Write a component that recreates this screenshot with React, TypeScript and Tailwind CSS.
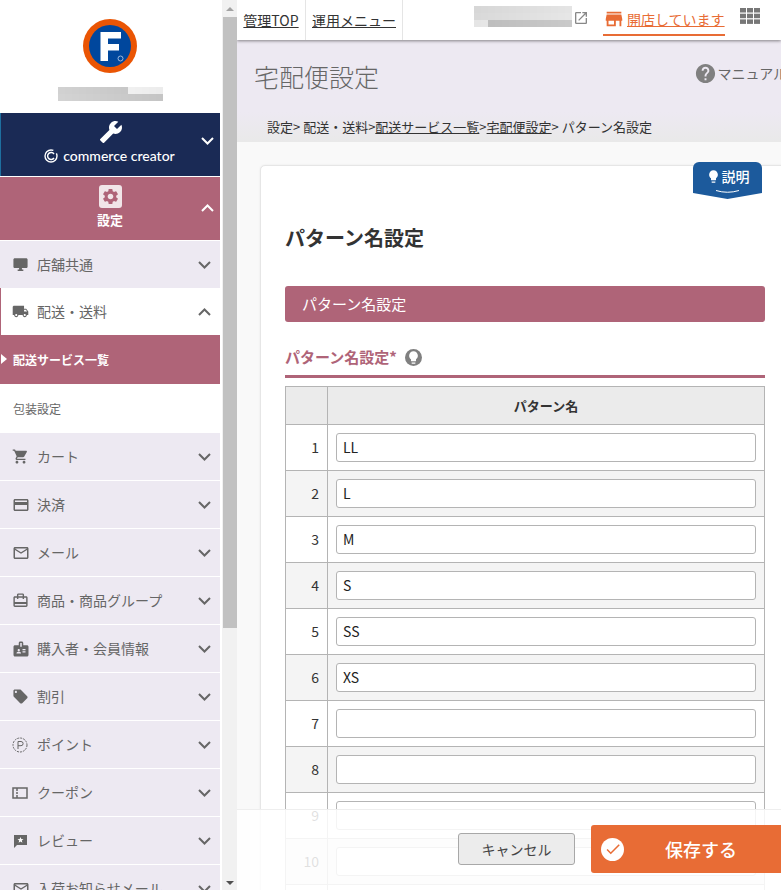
import React from "react";
import { MdBuild, MdSettings, MdLocalShipping, MdShoppingCart, MdCreditCard, MdMailOutline, MdLocalOffer, MdStore, MdHelp, MdLightbulb, MdOpenInNew, MdCheck, MdBadge, MdStar, MdDesktopWindows, MdCardTravel } from "react-icons/md";

const font = { fontFamily: '"Noto Sans CJK JP", "Noto Sans", sans-serif' };

function Chevron({ up = false, color = "#666", w = 2 }: { up?: boolean; color?: string; w?: number }) {
  return (
    <svg width="13" height="8" viewBox="0 0 13 8" fill="none" stroke={color} strokeWidth={w}>
      <path d={up ? "M1 7L6.5 1.5L12 7" : "M1 1L6.5 6.5L12 1"} />
    </svg>
  );
}

function Blur({ cols, rows, cell, seed }: { cols: number; rows: number; cell: number; seed: number }) {
  const rects = [];
  for (let r = 0; r < rows; r++) {
    for (let c = 0; c < cols; c++) {
      const v = (c * 37 + r * 53 + seed * (c + 3)) % 41;
      const g = 190 + v + (r === 0 ? 10 : 0);
      rects.push(<rect key={`${r}-${c}`} x={c * cell} y={r * cell} width={cell} height={cell} fill={`rgb(${g},${g},${g})`} />);
    }
  }
  return (
    <svg width={cols * cell} height={rows * cell} shapeRendering="crispEdges">
      {rects}
    </svg>
  );
}

function Logo() {
  return (
    <svg width="54" height="54" viewBox="0 0 54 54">
      <circle cx="27" cy="27" r="27" fill="#ea5504" />
      <circle cx="27" cy="27" r="21" fill="#00479d" />
      <path d="M17.5 13H38V19.5H25V25H36V31.5H25V42H17.5Z" fill="#fff" />
      <circle cx="37.5" cy="39.5" r="2.5" fill="none" stroke="#9db8dc" strokeWidth="1" />
    </svg>
  );
}

function PointIcon() {
  return (
    <svg width="16" height="16" viewBox="0 0 16 16" fill="none" stroke="#666">
      <circle cx="8" cy="8" r="7" strokeDasharray="2 1" />
      <path d="M6 12V4.5H9A2 2 0 0 1 9 8.7H6" />
    </svg>
  );
}

function CouponIcon() {
  return (
    <svg width="16" height="16" viewBox="0 0 16 16" fill="none" stroke="#666" strokeWidth="1.5">
      <path d="M1 3H15V13H1ZM5 3V6M5 7V9M5 10V13" />
    </svg>
  );
}

function ReviewIcon() {
  return (
    <svg width="16" height="16" viewBox="0 0 16 16">
      <path d="M2 2H15V12H5L2 15Z" fill="#666" />
      <path d="M8.5 4L9.3 6.1L11.5 6.2L9.8 7.6L10.4 9.7L8.5 8.5L6.6 9.7L7.2 7.6L5.5 6.2L7.7 6.1Z" fill="#fff" />
    </svg>
  );
}

function GoodsIcon() {
  return <MdCardTravel size={17} color="#666" />;
}

function MenuRow({ icon, label }: { icon: React.ReactNode; label: string }) {
  return (
    <div className="flex h-[48px] shrink-0 items-center border-b border-white bg-[#ede9f2] pl-[12px] pr-[9px] text-[14px] text-[#666]">
      <span className="flex w-[25px] shrink-0 items-center">{icon}</span>
      <span className="flex-1 whitespace-nowrap">{label}</span>
      <Chevron />
    </div>
  );
}

function Sidebar() {
  const gray = "#666";
  return (
    <aside className="flex h-[890px] w-[220px] shrink-0 flex-col overflow-hidden bg-white">
      <div className="flex h-[113px] shrink-0 flex-col items-center pt-[19px]">
        <Logo />
        <div className="mt-[14px]">
          <Blur cols={15} rows={2} cell={7} seed={3} />
        </div>
      </div>
      <div className="relative flex h-[63px] shrink-0 flex-col items-center border-l border-[#1e6f9f] bg-[#1a2a55] pt-[7px] text-white">
        <MdBuild size={24} className="-scale-x-100" />
        <div className="mt-[3px] flex items-center gap-[5px] pr-[2px] text-[14px] font-medium leading-[18px]" style={{ fontFamily: '"Lato", sans-serif' }}>
          <svg width="14" height="14" viewBox="0 0 14 14" fill="none" stroke="#fff" strokeWidth="1.4">
            <circle cx="7" cy="7" r="6" strokeDasharray="30 4" />
            <path d="M10 5A3.5 3.5 0 1 0 10 9" />
          </svg>
          <span>commerce creator</span>
        </div>
        <span className="absolute right-[6px] top-[24px]"><Chevron color="#fff" /></span>
      </div>
      <div className="relative mt-px flex h-[63px] shrink-0 flex-col items-center bg-[#af6478] pt-[8px] text-white">
        <span className="flex h-[23px] w-[23px] items-center justify-center rounded-[3px] bg-[#f1e5e8]">
          <MdSettings size={19} color="#af6478" />
        </span>
        <span className="mt-[2px] text-[13px] font-bold leading-[20px]">設定</span>
        <span className="absolute right-[6px] top-[27px]"><Chevron up color="#fff" /></span>
      </div>
      <div className="h-px shrink-0 bg-white" />
      <div className="flex h-[47px] shrink-0 items-center bg-[#ede9f2] pl-[12px] pr-[9px] text-[14px] text-[#666]">
        <span className="flex w-[25px] shrink-0 items-center"><MdDesktopWindows size={17} color={gray} /></span>
        <span className="flex-1">店舗共通</span>
        <Chevron />
      </div>
      <div className="flex h-[47px] shrink-0 items-center border-l border-[#af6478] bg-white pl-[11px] pr-[9px] text-[14px] text-[#666]">
        <span className="flex w-[25px] shrink-0 items-center"><MdLocalShipping size={17} color={gray} /></span>
        <span className="flex-1">配送・送料</span>
        <Chevron up />
      </div>
      <div className="relative flex h-[49px] shrink-0 items-center bg-[#af6478] pl-[13px] text-[12px] font-bold text-white">
        <span className="absolute left-px top-[19px] h-0 w-0 border-y-[5px] border-l-[6px] border-y-transparent border-l-white" />
        配送サービス一覧
      </div>
      <div className="flex h-[49px] shrink-0 items-center bg-white pl-[13px] text-[12px] text-[#666]">包装設定</div>
      <MenuRow icon={<MdShoppingCart size={17} color={gray} />} label="カート" />
      <MenuRow icon={<MdCreditCard size={18} color={gray} />} label="決済" />
      <MenuRow icon={<MdMailOutline size={18} color={gray} />} label="メール" />
      <MenuRow icon={<GoodsIcon />} label="商品・商品グループ" />
      <MenuRow icon={<MdBadge size={18} color={gray} />} label="購入者・会員情報" />
      <MenuRow icon={<MdLocalOffer size={17} color={gray} />} label="割引" />
      <MenuRow icon={<PointIcon />} label="ポイント" />
      <MenuRow icon={<CouponIcon />} label="クーポン" />
      <MenuRow icon={<ReviewIcon />} label="レビュー" />
      <MenuRow icon={<MdMailOutline size={18} color={gray} />} label="入荷お知らせメール" />
    </aside>
  );
}

function Scrollbar() {
  return (
    <div className="flex h-[890px] w-[15px] shrink-0 flex-col items-center bg-[#f1f1f1]">
      <div className="flex h-[17px] w-full shrink-0 items-center justify-center">
        <span className="h-0 w-0 border-x-[4px] border-b-[4px] border-x-transparent border-b-[#a3a3a3]" />
      </div>
      <div className="h-[611px] w-[14px] shrink-0 bg-[#c1c1c1]" />
      <div className="flex-1" />
      <div className="flex h-[14px] w-full shrink-0 items-center justify-center">
        <span className="h-0 w-0 border-x-[4px] border-t-[4px] border-x-transparent border-t-[#505050]" />
      </div>
    </div>
  );
}

function TopBar() {
  return (
    <header className="relative z-10 flex h-[40px] shrink-0 items-center bg-white text-[14px] text-[#333] shadow-[0_1px_3px_rgba(0,0,0,0.45)]">
      <div className="flex h-full w-[69px] items-center justify-center border-r border-[#e5e5e5]"><span className="underline">管理TOP</span></div>
      <div className="flex h-full w-[97px] items-center justify-center border-r border-[#e5e5e5]"><span className="underline">運用メニュー</span></div>
      <div className="ml-[71px] mt-[-8px]"><Blur cols={14} rows={3} cell={7} seed={5} /></div>
      <MdOpenInNew size={16} color="#888" className="ml-px -mt-[4px]" />
      <div className="ml-[14px] flex h-[31px] items-center border-b-2 border-[#e86c35] text-[#e86c35]">
        <MdStore size={22} className="mr-[2px]" />
        <span className="underline">開店しています</span>
      </div>
      <svg className="ml-[15px] -mt-[8px]" width="20" height="16" viewBox="0 0 20 16" fill="#777">
        <rect x="0" y="0" width="6" height="4.5" /><rect x="7" y="0" width="6" height="4.5" /><rect x="14" y="0" width="6" height="4.5" />
        <rect x="0" y="5.7" width="6" height="4.5" /><rect x="7" y="5.7" width="6" height="4.5" /><rect x="14" y="5.7" width="6" height="4.5" />
        <rect x="0" y="11.4" width="6" height="4.5" /><rect x="7" y="11.4" width="6" height="4.5" /><rect x="14" y="11.4" width="6" height="4.5" />
      </svg>
    </header>
  );
}

const rows = ["LL", "L", "M", "S", "SS", "XS", "", "", "", "", ""];

function Table() {
  return (
    <table className="mt-[8px] w-[480px] table-fixed border-collapse text-[14px] text-[#333]">
      <colgroup>
        <col className="w-[42px]" />
        <col />
      </colgroup>
      <thead>
        <tr className="h-[38px] bg-[#ebebeb]">
          <th className="border border-[#b4b4b4]" />
          <th className="border border-[#b4b4b4] text-[13px] font-bold">パターン名</th>
        </tr>
      </thead>
      <tbody>
        {rows.map((v, i) => (
          <tr key={i} className={i % 2 === 0 ? "h-[46px] bg-white" : "h-[46px] bg-[#f4f4f4]"}>
            <td className="border border-[#b4b4b4] pr-[8px] text-right">{i + 1}</td>
            <td className="border border-[#b4b4b4] px-[8px]">
              <div className="flex h-[29px] items-center rounded-[3px] border border-[#b4b4b4] bg-white px-[6px] text-[#222]">{v}</div>
            </td>
          </tr>
        ))}
      </tbody>
    </table>
  );
}

function Main() {
  return (
    <main className="relative flex h-[890px] min-w-0 flex-1 flex-col overflow-hidden bg-[#f9f9f9]">
      <TopBar />
      <div className="flex h-[72px] shrink-0 items-start justify-between overflow-hidden bg-[#ede9f2] pl-[17px] pt-[17px] text-[#666]">
        <h1 className="whitespace-nowrap text-[25px] font-light leading-[38px]">宅配便設定</h1>
        <div className="flex shrink-0 translate-x-[6px] items-center whitespace-nowrap pt-[5px] text-[14px]">
          <MdHelp size={23} color="#808080" />
          <span>マニュアル</span>
        </div>
      </div>
      <div className="flex h-[30px] shrink-0 items-center bg-gradient-to-b from-[#ede9f2] to-[#e9e9e9] pl-[30px] text-[13px] text-[#333]">
        設定&gt; 配送・送料&gt; <span className="underline">配送サービス一覧</span>&gt; <span className="underline">宅配便設定</span>&gt; パターン名設定
      </div>
      <div className="relative ml-[23px] mt-[23px] w-[560px] shrink-0 rounded-[5px] border border-[#e6e6e6] bg-white pl-[24px] shadow-[0_0_2px_rgba(0,0,0,0.08)]">
        <div className="absolute left-[432px] top-[-4px] flex h-[28px] w-[69px] items-center justify-center gap-[1px] rounded-t-[6px] bg-[#1c5a9c] text-[14px] font-medium text-white">
          <MdLightbulb size={15} />
          <span>説明</span>
        </div>
        <svg className="absolute left-[432px] top-[24px]" width="69" height="9" viewBox="0 0 69 9">
          <path d="M0 0H69V3L34.5 9L0 3Z" fill="#1c5a9c" />
          <path d="M23 0.5Q34.5 4 46 0.5" fill="none" stroke="#fff" />
        </svg>
        <h2 className="pt-[55px] text-[20px] font-bold leading-[34px] text-[#333]">パターン名設定</h2>
        <div className="mt-[31px] flex h-[36px] w-[480px] items-center rounded-[3px] bg-[#af6478] pl-[17px] text-[15px] text-white">パターン名設定</div>
        <div className="mt-[21px] flex h-[35px] w-[480px] items-center gap-[8px] border-b-[3px] border-[#af6478] pb-[3px] text-[15px] font-bold text-[#af6478]">
          <span>パターン名設定*</span>
          <span className="flex h-[17px] w-[17px] items-center justify-center rounded-full bg-[#808080]"><MdLightbulb size={15} color="#fff" /></span>
        </div>
        <Table />
      </div>
      <div className="absolute inset-x-0 bottom-0 flex h-[81px] items-start justify-end border-t border-[#eeeeee] bg-white/85">
        <button className="mr-[16px] mt-[23px] h-[32px] w-[117px] rounded-[3px] border border-[#a8a8a8] bg-[#ececec] text-[14px] text-[#444]">キャンセル</button>
        <button className="relative mt-[15px] flex h-[48px] w-[190px] items-center justify-center rounded-l-[3px] bg-[#e86c35] pl-[30px] text-[18px] font-medium text-white">
          <span className="absolute left-[10px] flex h-[23px] w-[23px] items-center justify-center rounded-full bg-white"><MdCheck size={18} color="#e86c35" /></span>
          保存する
        </button>
      </div>
    </main>
  );
}

export default function App() {
  return (
    <div className="flex h-[890px] w-[781px] overflow-hidden bg-white" style={font}>
      <Sidebar />
      <div className="w-[2px] shrink-0 bg-white" />
      <Scrollbar />
      <Main />
    </div>
  );
}
